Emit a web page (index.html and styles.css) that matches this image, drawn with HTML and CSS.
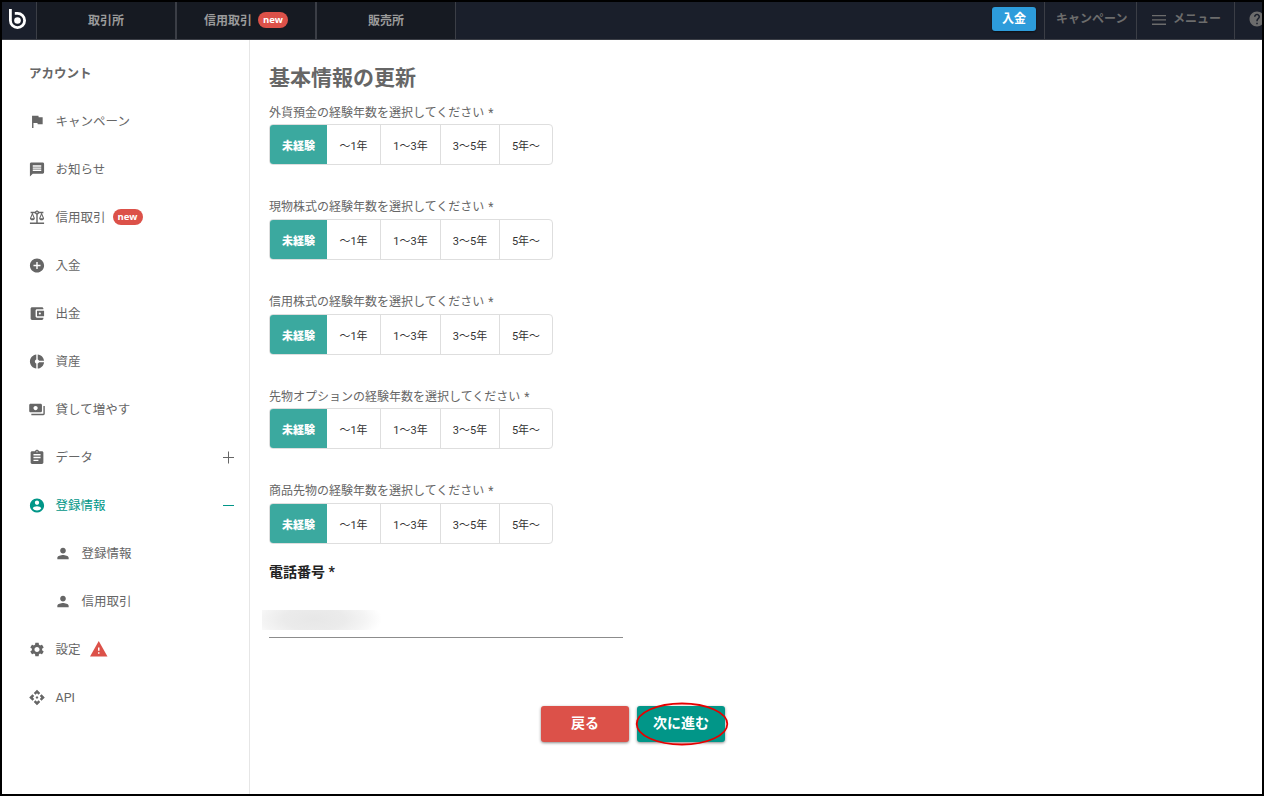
FILE: index.html
```html
<!DOCTYPE html>
<html lang="ja">
<head>
<meta charset="utf-8">
<title>基本情報の更新</title>
<link rel="stylesheet" href="styles.css">
</head>
<body>
<div class="app">
  <header class="topbar">
    <div class="logo">
      <svg width="19" height="22" viewBox="0 0 19 22" fill="none" stroke="#fff" stroke-width="2.800"><path d="M2.400 1v11.500a7.100 7.100 0 1 0 7.100-7.100H6.800"/><circle cx="9.500" cy="12.500" r="3.300" fill="#fff" stroke="none"/></svg>
    </div>
    <nav class="tabs">
      <a class="tab">取引所</a>
      <a class="tab">信用取引<span class="new">new</span></a>
      <a class="tab last">販売所</a>
    </nav>
    <div class="actions">
      <button class="deposit">入金</button>
      <a class="action campaign">キャンペーン</a>
      <a class="action menu"><svg width="14" height="10" viewBox="0 0 14 10" fill="#6c6c6c"><path d="M0 0h14v1.300H0zM0 4.300h14v1.300H0zM0 8.600h14v1.300H0z"/></svg>メニュー</a>
      <a class="action help"><svg width="18" height="18" viewBox="0 0 24 24" fill="#6c6c6c"><path d="M12 2C6.480 2 2 6.480 2 12s4.480 10 10 10 10-4.480 10-10S17.520 2 12 2zm1 17h-2v-2h2v2zm2.070-7.750l-.9.920C13.450 12.900 13 13.500 13 15h-2v-.5c0-1.100.45-2.100 1.170-2.830l1.240-1.260c.37-.36.59-.86.59-1.410 0-1.100-.9-2-2-2s-2 .9-2 2H8c0-2.210 1.790-4 4-4s4 1.790 4 4c0 .88-.36 1.680-.93 2.250z"/></svg></a>
    </div>
  </header>
  <div class="body">
    <aside class="sidebar">
      <div class="title">アカウント</div>
      <a class="item"><svg class="icon" viewBox="0 0 24 24"><path d="M14.400 6L14 4H5v17h2v-7h5.600l.4 2h7V6z"/></svg>キャンペーン</a>
      <a class="item"><svg class="icon" viewBox="0 0 24 24"><path d="M20 2H4c-1.100 0-2 .9-2 2v18l4-4h14c1.100 0 2-.9 2-2V4c0-1.100-.9-2-2-2zm-2 12H6v-2h12v2zm0-3H6V9h12v2zm0-3H6V6h12v2z"/></svg>お知らせ</a>
      <a class="item"><svg class="icon" viewBox="0 0 24 24"><path d="M13 7.830c.85-.3 1.530-.98 1.830-1.830H18l-3 7c0 1.660 1.570 3 3.500 3s3.500-1.340 3.500-3l-3-7h2V4h-6.170c-.41-1.170-1.520-2-2.830-2s-2.420.83-2.830 2H3v2h2l-3 7c0 1.660 1.570 3 3.500 3S9 14.660 9 13L6 6h3.170c.3.850.98 1.530 1.830 1.830V19H2v2h20v-2h-9V7.830zM20.370 13h-3.740l1.870-4.360L20.370 13zm-13 0H3.630L5.500 8.640 7.370 13zM12 6c-.55 0-1-.45-1-1s.45-1 1-1 1 .45 1 1-.45 1-1 1z"/></svg>信用取引<span class="new">new</span></a>
      <a class="item"><svg class="icon" viewBox="0 0 24 24"><path d="M12 2C6.480 2 2 6.480 2 12s4.480 10 10 10 10-4.480 10-10S17.520 2 12 2zm5 11h-4v4h-2v-4H7v-2h4V7h2v4h4v2z"/></svg>入金</a>
      <a class="item"><svg class="icon" viewBox="0 0 24 24"><path d="M21 18v1c0 1.100-.9 2-2 2H5c-1.110 0-2-.9-2-2V5c0-1.100.89-2 2-2h14c1.100 0 2 .9 2 2v1h-9c-1.110 0-2 .9-2 2v8c0 1.100.89 2 2 2h9zm-9-2h10V8H12v8zm4-2.500c-.83 0-1.500-.67-1.500-1.500s.67-1.500 1.500-1.500 1.500.67 1.500 1.500-.67 1.500-1.500 1.500z"/></svg>出金</a>
      <a class="item"><svg class="icon" viewBox="0 0 24 24"><path d="M11 9.160V2c-5 .5-9 4.790-9 10s4 9.500 9 10v-7.160c-1-.41-2-1.520-2-2.840s1-2.430 2-2.840zM14.860 11H22c-.48-4.750-4-8.530-9-9v7.160c1 .3 1.520.98 1.860 1.840zM13 14.840V22c5-.47 8.520-4.250 9-9h-7.140c-.34.86-.86 1.540-1.860 1.840z"/></svg>資産</a>
      <a class="item"><svg class="icon" viewBox="0 0 24 24"><path d="M19 14V6c0-1.100-.9-2-2-2H3c-1.100 0-2 .9-2 2v8c0 1.100.9 2 2 2h14c1.100 0 2-.9 2-2zm-9-1c-1.660 0-3-1.340-3-3s1.340-3 3-3 3 1.340 3 3-1.340 3-3 3zm13-6v11c0 1.100-.9 2-2 2H4v-2h17V7h2z"/></svg>貸して増やす</a>
      <a class="item"><svg class="icon" viewBox="0 0 24 24"><path d="M19 3h-4.180C14.400 1.840 13.300 1 12 1s-2.400.84-2.820 2H5c-1.100 0-2 .9-2 2v14c0 1.100.9 2 2 2h14c1.100 0 2-.9 2-2V5c0-1.100-.9-2-2-2zm-7 0c.55 0 1 .45 1 1s-.45 1-1 1-1-.45-1-1 .45-1 1-1zm2 14H7v-2h7v2zm3-4H7v-2h10v2zm0-4H7V7h10v2z"/></svg>データ<svg class="toggle" width="11" height="12" viewBox="0 0 11 12"><path d="M0 6.500h11M5.500 0.500v12"/></svg></a>
      <a class="item active"><svg class="icon" viewBox="0 0 24 24"><path d="M12 2C6.480 2 2 6.480 2 12s4.480 10 10 10 10-4.480 10-10S17.520 2 12 2zm0 3c1.660 0 3 1.340 3 3s-1.340 3-3 3-3-1.340-3-3 1.340-3 3-3zm0 14.200c-2.500 0-4.710-1.280-6-3.220.03-1.990 4-3.080 6-3.080 1.990 0 5.970 1.090 6 3.080-1.290 1.940-3.500 3.220-6 3.220z"/></svg>登録情報<svg class="toggle" width="11" height="12" viewBox="0 0 11 12"><path d="M0 6.500h11"/></svg></a>
      <a class="item sub"><svg class="icon" viewBox="0 0 24 24"><path d="M12 12c2.210 0 4-1.790 4-4s-1.790-4-4-4-4 1.790-4 4 1.790 4 4 4zm0 2c-2.670 0-8 1.340-8 4v2h16v-2c0-2.660-5.330-4-8-4z"/></svg>登録情報</a>
      <a class="item sub"><svg class="icon" viewBox="0 0 24 24"><path d="M12 12c2.210 0 4-1.790 4-4s-1.790-4-4-4-4 1.790-4 4 1.790 4 4 4zm0 2c-2.670 0-8 1.340-8 4v2h16v-2c0-2.660-5.330-4-8-4z"/></svg>信用取引</a>
      <a class="item"><svg class="icon" viewBox="0 0 24 24"><path d="M19.140 12.940c.04-.3.06-.61.06-.94 0-.32-.02-.64-.07-.94l2.030-1.580c.18-.14.23-.41.12-.61l-1.920-3.320c-.12-.22-.37-.29-.59-.22l-2.390.96c-.5-.38-1.030-.7-1.620-.94l-.36-2.540c-.04-.24-.24-.41-.48-.41h-3.840c-.24 0-.43.17-.47.41l-.36 2.540c-.59.24-1.130.57-1.620.94l-2.390-.96c-.22-.08-.47 0-.59.22L2.740 8.870c-.12.21-.08.47.12.61l2.030 1.580c-.05.3-.09.63-.09.94s.02.64.07.94l-2.030 1.580c-.18.14-.23.41-.12.61l1.920 3.320c.12.22.37.29.59.22l2.390-.96c.5.38 1.030.7 1.620.94l.36 2.540c.05.24.24.41.48.41h3.840c.24 0 .44-.17.47-.41l.36-2.540c.59-.24 1.130-.56 1.620-.94l2.390.96c.22.08.47 0 .59-.22l1.920-3.320c.12-.22.07-.47-.12-.61l-2.010-1.580zM12 15.600c-1.980 0-3.600-1.620-3.600-3.600s1.620-3.600 3.600-3.600 3.600 1.620 3.600 3.600-1.620 3.600-3.600 3.600z"/></svg>設定<svg class="warn" width="18" height="16" viewBox="0 0 18 16"><path fill="#dc5149" d="M0 15.500h17.500L8.750 0z"/><path fill="#fff" d="M8 6.500h1.500v3.200H8zM8 11.200h1.500v1.500H8z"/></svg></a>
      <a class="item"><svg class="icon" viewBox="0 0 24 24"><path d="M14 12l-2 2-2-2 2-2 2 2zm-2-6l2.120 2.120 2.500-2.500L12 1 7.380 5.620l2.500 2.500L12 6zm-6 6l2.120-2.120-2.500-2.500L1 12l4.620 4.620 2.500-2.500L6 12zm12 0l-2.120 2.120 2.500 2.500L23 12l-4.620-4.620-2.500 2.500L18 12zm-6 6l-2.120-2.120-2.500 2.500L12 23l4.620-4.620-2.500-2.500L12 18z"/></svg><span class="latin">API</span></a>
    </aside>
    <main class="main">
      <h1>基本情報の更新</h1>
      <section class="question"><div class="label">外貨預金の経験年数を選択してください <i>*</i></div>
        <div class="choices"><span class="on">未経験</span><span>〜1年</span><span>1〜3年</span><span>3〜5年</span><span>5年〜</span></div></section>
      <section class="question"><div class="label">現物株式の経験年数を選択してください <i>*</i></div>
        <div class="choices"><span class="on">未経験</span><span>〜1年</span><span>1〜3年</span><span>3〜5年</span><span>5年〜</span></div></section>
      <section class="question"><div class="label">信用株式の経験年数を選択してください <i>*</i></div>
        <div class="choices"><span class="on">未経験</span><span>〜1年</span><span>1〜3年</span><span>3〜5年</span><span>5年〜</span></div></section>
      <section class="question"><div class="label">先物オプションの経験年数を選択してください <i>*</i></div>
        <div class="choices"><span class="on">未経験</span><span>〜1年</span><span>1〜3年</span><span>3〜5年</span><span>5年〜</span></div></section>
      <section class="question"><div class="label">商品先物の経験年数を選択してください <i>*</i></div>
        <div class="choices"><span class="on">未経験</span><span>〜1年</span><span>1〜3年</span><span>3〜5年</span><span>5年〜</span></div></section>
      <div class="phone-label">電話番号 *</div>
      <div class="phone"><div class="masked"></div></div>
      <div class="buttons">
        <button class="btn back">戻る</button>
        <button class="btn next">次に進む<svg class="ring" width="94" height="44" viewBox="0 0 94 44" fill="none" stroke="#e60000" stroke-width="1.800"><ellipse cx="47" cy="22" rx="45.300" ry="20.500"/></svg></button>
      </div>
    </main>
  </div>
</div>
</body>
</html>
```

FILE: styles.css
```css
* { box-sizing: border-box; }
body {
  margin: 0;
  font-family: Roboto, "Noto Sans CJK JP", sans-serif;
  color: #666;
}
button { border: 0; padding: 0; font-family: inherit; }
.app {
  width: 1264px;
  height: 796px;
  border: 2px solid #000;
  background: #fff;
  overflow: hidden;
  display: flex;
  flex-direction: column;
}
.topbar {
  height: 38px;
  flex: none;
  display: flex;
  background: #1a1f2b;
  border-bottom: 1px solid #3b3e46;
  font-size: 12px;
  font-weight: 700;
}
.logo {
  width: 35px;
  border-right: 1px solid #3b3e46;
  padding: 6px 0 0 6px;
}
.tabs { display: flex; background: #161a22; }
.tab {
  width: 140px;
  border-right: 2px solid #3b3e46;
  display: flex;
  align-items: center;
  justify-content: center;
  padding-bottom: 2px;
  color: #9b9b9b;
}
.tab.last { width: 139px; border-right-width: 1px; }
.new {
  width: 30px;
  height: 16px;
  border-radius: 8px;
  background: #dc5149;
  color: #fff;
  font: 700 9.500px/15px "Open Sans", sans-serif;
  text-align: center;
}
.tab .new { margin-left: 6px; }
.actions { margin-left: auto; display: flex; }
.deposit {
  width: 44px;
  height: 24px;
  margin: 5px 8px 0 0;
  border-radius: 3px;
  background: #2d9cdb;
  color: #fff;
  font-size: 12px;
  line-height: 22px;
  font-weight: 700;
  box-shadow: 0 1px 2px #0008;
}
.action {
  border-left: 1px solid #3b3e46;
  display: flex;
  align-items: center;
  color: #6c6c6c;
  padding-bottom: 6px;
}
.campaign { width: 92px; padding-left: 11px; }
.menu { width: 98px; padding-left: 15px; gap: 7px; }
.menu svg { margin-top: 5px; }
.help { width: 28px; padding: 0 0 3px 13px; overflow: hidden; }
.help svg { flex: none; }
.body { flex: 1; display: flex; }
.sidebar {
  width: 248px;
  border-right: 1px solid #e6e6e6;
  padding-top: 9px;
}
.title {
  height: 47px;
  line-height: 49px;
  padding-left: 27px;
  font-size: 12.500px;
  font-weight: 700;
}
.item {
  height: 48px;
  padding: 0 15px 0 26.500px;
  display: flex;
  align-items: center;
  font-size: 12.500px;
}
.icon { width: 17px; height: 17px; fill: currentColor; margin: 3px 10px 0 0; flex: none; transform: translateX(-.5px); }
.item .new { margin: 1px 0 0 7px; }
.toggle { margin: 1px 0 0 auto; overflow: visible; stroke: currentColor; }
.active { color: #019688; }
.sub { padding-left: 52.500px; }
.latin { padding-top: 2px; }
.warn { margin: 1px 0 0 9.500px; }
.main { flex: 1; padding: 23px 0 0 19px; }
h1 { margin: 0; font-size: 21px; line-height: 30px; font-weight: 700; height: 38.900px; }
.question { height: 94.600px; }
.label { height: 22.500px; line-height: 23px; font-size: 12px; }
.label i { font-style: normal; margin-left: 1px; }
.choices {
  width: 284px;
  height: 41px;
  border: 1px solid #dedede;
  border-radius: 4px;
  display: grid;
  grid-template-columns: 57px 54px 60px 59px 52px;
  overflow: hidden;
  color: #333;
  font-size: 11px;
  line-height: 43px;
  text-align: center;
}
.choices span { border-right: 1px solid #dedede; }
.choices span:last-child { border-right: 0; }
.choices .on { background: #3ba99f; border: 0; color: #fff; font-weight: 900; }
.phone-label { margin-top: -17.400px; height: 30px; line-height: 31px; font-size: 14px; font-weight: 700; color: #222; }
.phone {
  width: 354px;
  height: 51px;
  border-bottom: 1px solid #8c8c8c;
  padding-top: 23px;
}
.masked {
  width: 120px;
  height: 20px;
  margin-left: -7px;
  background: radial-gradient(ellipse 68px 26px at 52px 9px, #e7e7e7, #ebebeb 45%, #f4f4f4 75%, #fff);
}
.buttons { display: flex; gap: 8px; padding: 68px 0 0 272px; }
.btn {
  width: 88px;
  height: 36px;
  border-radius: 3px;
  color: #fff;
  font-size: 14px;
  font-weight: 700;
  line-height: 33px;
  padding-bottom: 2px;
  box-shadow: 0 1px 3px #0007;
}
.back { background: #dc5149; }
.next { background: #019688; position: relative; }
.ring { position: absolute; left: -2px; top: -4px; }
```
